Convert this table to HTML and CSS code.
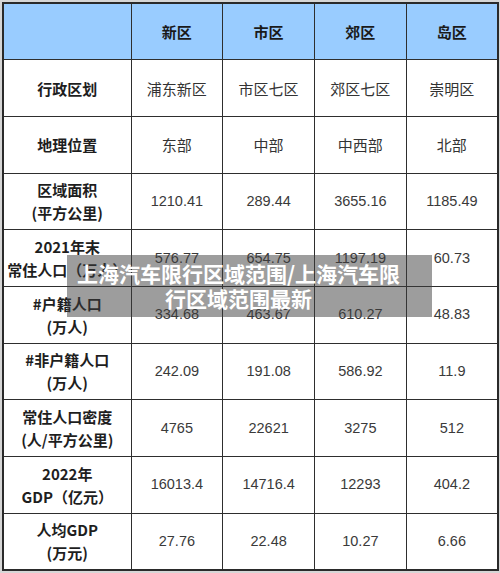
FILE: index.html
```html
<!DOCTYPE html>
<html lang="zh-CN">
<head>
<meta charset="utf-8">
<link rel="stylesheet" href="styles.css">
</head>
<body>
<div class="frame">
<table class="grid">
  <colgroup>
    <col class="c-label"><col class="c-data"><col class="c-data"><col class="c-data"><col class="c-data">
  </colgroup>
  <thead>
    <tr class="head">
      <th></th><th>新区</th><th>市区</th><th>郊区</th><th>岛区</th>
    </tr>
  </thead>
  <tbody>
    <tr><th>行政区划</th><td>浦东新区</td><td>市区七区</td><td>郊区七区</td><td>崇明区</td></tr>
    <tr><th>地理位置</th><td>东部</td><td>中部</td><td>中西部</td><td>北部</td></tr>
    <tr><th>区域面积<br>(平方公里)</th><td class="num">1210.41</td><td class="num">289.44</td><td class="num">3655.16</td><td class="num">1185.49</td></tr>
    <tr><th>2021年末<br>常住人口（万人）</th><td class="num">576.77</td><td class="num">654.75</td><td class="num">1197.19</td><td class="num">60.73</td></tr>
    <tr><th>#户籍人口<br>(万人)</th><td class="num">334.68</td><td class="num">463.67</td><td class="num">610.27</td><td class="num">48.83</td></tr>
    <tr><th>#非户籍人口<br>(万人)</th><td class="num">242.09</td><td class="num">191.08</td><td class="num">586.92</td><td class="num">11.9</td></tr>
    <tr><th>常住人口密度<br>(人/平方公里)</th><td class="num">4765</td><td class="num">22621</td><td class="num">3275</td><td class="num">512</td></tr>
    <tr><th>2022年<br>GDP（亿元）</th><td class="num">16013.4</td><td class="num">14716.4</td><td class="num">12293</td><td class="num">404.2</td></tr>
    <tr><th>人均GDP<br>(万元)</th><td class="num">27.76</td><td class="num">22.48</td><td class="num">10.27</td><td class="num">6.66</td></tr>
  </tbody>
</table>
</div>
<div class="banner">
  <span class="banner-text">上海汽车限行区域范围/上海汽车限<br>行区域范围最新</span>
</div>
</body>
</html>
```
FILE: styles.css
```css
html, body {
  margin: 0;
  padding: 0;
}
body {
  width: 500px;
  height: 573px;
  background: #d6d6d6;
  overflow: hidden;
  font-family: "Noto Sans CJK SC", "Noto Sans", sans-serif;
}
.frame {
  padding: 2px 3px 4px 2px;
}
.grid {
  border-collapse: collapse;
  width: 495px;
  height: 567px;
  table-layout: fixed;
  background: #ffffff;
  border: 2px solid #2a2a2a;
}
.c-label { width: 128px; }
.c-data { width: 91.75px; }
.grid tr {
  height: 56.7px;
}
.grid th, .grid td {
  border: 1px solid #2e2e2e;
  text-align: center;
  vertical-align: middle;
  padding: 0;
  font-size: 15px;
  line-height: 23px;
  height: 48px;
}
.grid th {
  font-weight: 700;
  color: #1e1e1e;
}
.grid td {
  font-weight: 400;
  color: #333333;
}
.head th {
  background: #99ccff;
  color: #1a1a1a;
}
.grid td.num {
  font-family: "Liberation Sans", Arial, sans-serif;
  font-size: 14.5px;
  color: #3a3a3a;
}
.banner {
  position: absolute;
  left: 67px;
  top: 255px;
  width: 365px;
  height: 62px;
  background: rgba(60, 60, 60, 0.5);
  display: flex;
  align-items: center;
  justify-content: center;
  box-sizing: border-box;
  padding: 0 22px 0 0;
}
.banner-text {
  color: #ffffff;
  font-family: "Noto Sans CJK SC", sans-serif;
  font-weight: 700;
  font-size: 21px;
  line-height: 25px;
  text-align: center;
}
```
